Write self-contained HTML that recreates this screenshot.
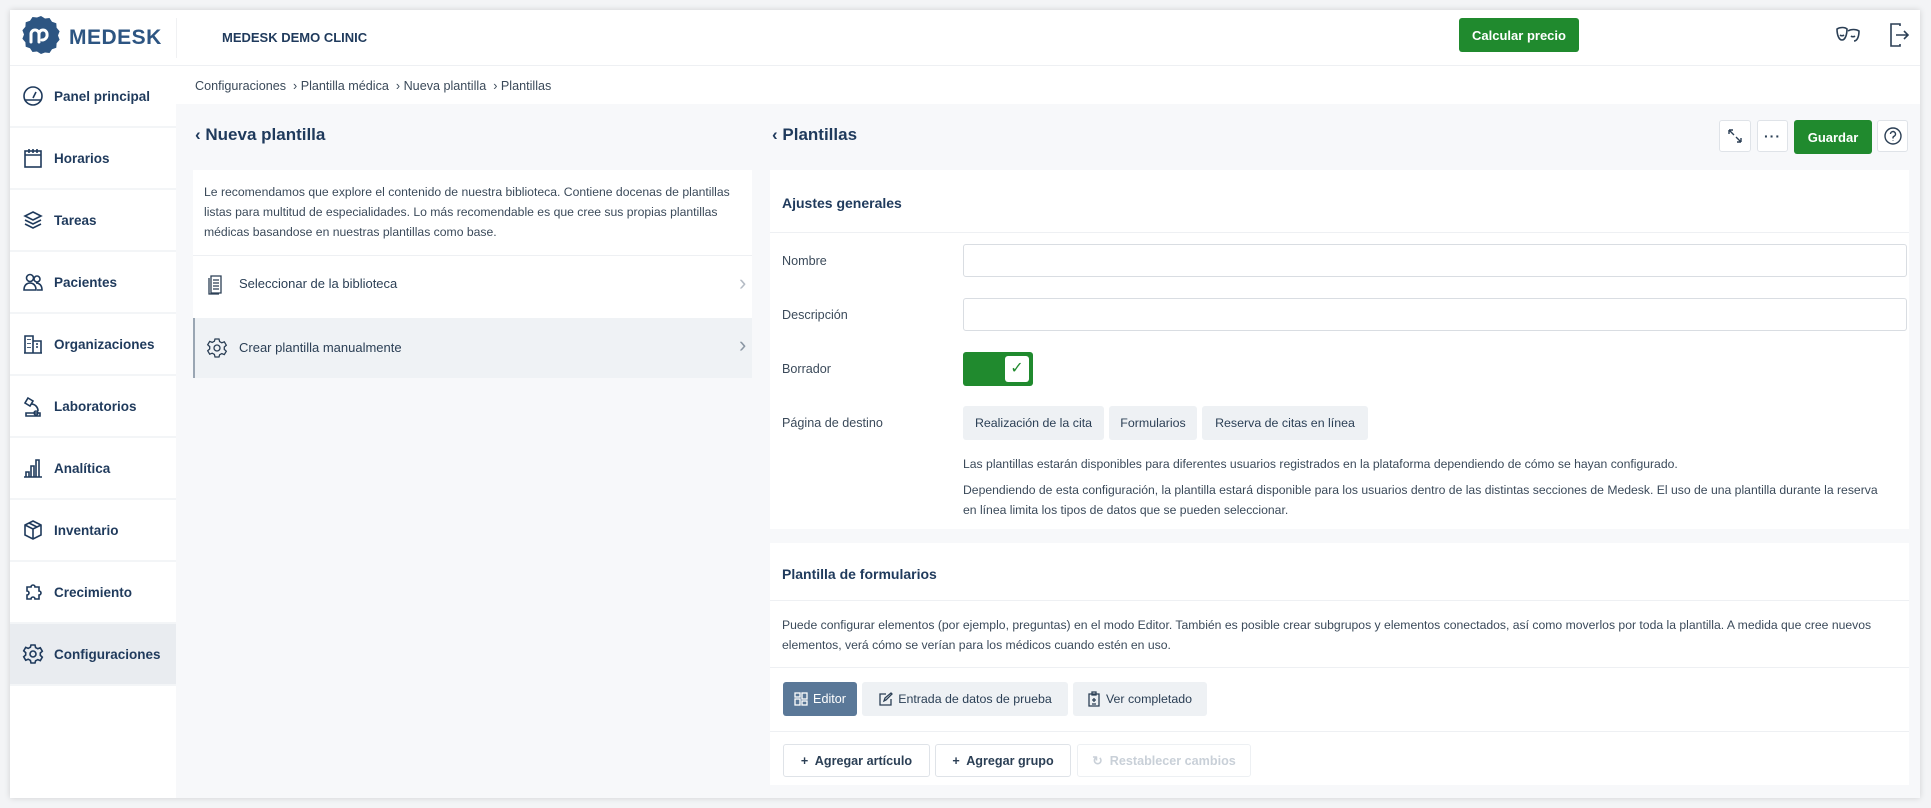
<!DOCTYPE html>
<html><head><meta charset="utf-8"><style>
*{box-sizing:border-box;margin:0;padding:0}
body{width:1931px;height:808px;background:#f3f4f6;font-family:"Liberation Sans",sans-serif;color:#2b3f55;position:relative;overflow:hidden}
.frame{position:absolute;left:10px;top:10px;width:1910px;height:788px;background:#fff;box-shadow:0 0 6px rgba(0,0,0,.15);overflow:hidden}
.abs{position:absolute}
.header{left:0;top:0;width:1910px;height:56px;background:#fff;border-bottom:1px solid #eef0f3}
.side{left:0;top:56px;width:166px;height:732px;background:#fff}
.si{position:absolute;left:0;width:166px;height:62px;border-bottom:2px solid #f3f5f7;display:flex;align-items:center;padding-left:12px;font-weight:bold;font-size:13.5px;color:#1f3a5c}
.si svg{width:22px;height:22px;margin-right:10px;flex:none}
.content{left:166px;top:94px;width:1744px;height:694px;background:#f7f8fa}
.card{position:absolute;background:#fff}
.txt{font-size:12.2px;color:#3b4a5a;line-height:20px}
.lbl{position:absolute;font-size:12.6px;color:#3b4a5a}
.inp{position:absolute;border:1px solid #d9dde2;border-radius:3px;background:#fff}
.chip{position:absolute;top:396px;height:34px;background:#eef1f4;border-radius:3px;font-size:12.4px;color:#2b3f55;display:flex;align-items:center;justify-content:center}
.btn{position:absolute;border:1px solid #dfe3e8;border-radius:3px;background:#fff;display:flex;align-items:center;justify-content:center;font-size:12.6px;font-weight:bold;color:#2b3f55}
.hl{position:absolute;height:1px;background:#eef0f3}
</style></head><body>
<div class="frame">
 <div class="abs header">
  <svg class="abs" style="left:11px;top:5px" width="40" height="40" viewBox="0 0 40 40"><path d="M20 1l4 2.5 4.5-.5 2.5 3.8 4.3 1.5.3 4.5 3 3.4-1.6 4.3 1.6 4.3-3 3.4-.3 4.5-4.3 1.5-2.5 3.8-4.5-.5L20 39l-4-2.5-4.5.5-2.5-3.8-4.3-1.5-.3-4.5-3-3.4L3 19.5 1.4 15.2l3-3.4.3-4.5L9 5.8 11.5 2l4.5.5z" fill="#2d5582"/><path d="M10 27v-8a4 4 0 0 1 8 0v8M18 19a4 4 0 0 1 8 0 5 5 0 0 1-5 6" stroke="#fff" stroke-width="3" fill="none" stroke-linecap="round"/></svg>
  <div class="abs" style="left:59px;top:16px;font-weight:bold;font-size:21px;color:#2d5582;letter-spacing:.5px">MEDESK</div>
  <div class="abs" style="left:166px;top:8px;width:1px;height:40px;background:#f0f1f3"></div>
  <div class="abs" style="left:212px;top:20px;font-weight:bold;font-size:13px;color:#1f3a5c">MEDESK DEMO CLINIC</div>
  <div class="abs" style="left:1449px;top:8px;width:120px;height:34px;background:#208a2e;border-radius:3px;color:#fff;font-weight:bold;font-size:13px;display:flex;align-items:center;justify-content:center">Calcular precio</div>
  <svg class="abs" style="left:1825px;top:14px" width="26" height="22" viewBox="0 0 26 22" fill="none" stroke="#2b3f55" stroke-width="1.6"><path d="M2 5c3-2 8-2 10 0 0 6-2 11-5 11S2 11 2 5z"/><path d="M13 7c3-2 8-2 11 0 0 6-2 10-5 10"/><path d="M5 11c1 1 3 1 4 0M16 12c1 1 3 1 4 0"/></svg>
  <svg class="abs" style="left:1878px;top:12px" width="22" height="26" viewBox="0 0 22 26" fill="none" stroke="#2b3f55" stroke-width="1.6"><path d="M12 4V2H3v22h9v-2"/><path d="M8 13h12M16 9l4 4-4 4"/></svg>
 </div>
 <div class="abs side">
  <div class="si" style="top:0"><svg viewBox="0 0 22 22" fill="none" stroke="#1f3a5c" stroke-width="1.6"><circle cx="11" cy="11" r="9"/><path d="M11 13l3-6M3 15h16"/></svg>Panel principal</div>
  <div class="si" style="top:62px"><svg viewBox="0 0 22 22" fill="none" stroke="#1f3a5c" stroke-width="1.6"><rect x="3" y="4" width="16" height="16"/><path d="M3 8h16M7 2v4M11 2v4M15 2v4"/></svg>Horarios</div>
  <div class="si" style="top:124px"><svg viewBox="0 0 22 22" fill="none" stroke="#1f3a5c" stroke-width="1.6"><path d="M11 3l8 4-8 4-8-4z M3 11l8 4 8-4M3 15l8 4 8-4"/></svg>Tareas</div>
  <div class="si" style="top:186px"><svg viewBox="0 0 22 22" fill="none" stroke="#1f3a5c" stroke-width="1.6"><circle cx="8" cy="7" r="3.5"/><circle cx="15" cy="8" r="3"/><path d="M2 19c0-5 3-7 6-7s6 2 6 7zM14 12c3 0 6 2 6 7h-5"/></svg>Pacientes</div>
  <div class="si" style="top:248px"><svg viewBox="0 0 22 22" fill="none" stroke="#1f3a5c" stroke-width="1.6"><path d="M3 20V3h8v17M11 8h8v12M2 20h18M6 6v1M8 6v1M6 10v1M8 10v1M6 14v1M8 14v1M14 11h2M14 14h2"/></svg>Organizaciones</div>
  <div class="si" style="top:310px"><svg viewBox="0 0 22 22" fill="none" stroke="#1f3a5c" stroke-width="1.6"><path d="M6 3l5 3-3 5-5-3zM9 9c4 0 7 3 7 7M4 18h14v3H4zM14 16a2 2 0 1 0 0.1 0"/></svg>Laboratorios</div>
  <div class="si" style="top:372px"><svg viewBox="0 0 22 22" fill="none" stroke="#1f3a5c" stroke-width="1.6"><path d="M2 20h18M4 20v-5h3v5M9 20V9h3v11M14 20V3h3v17"/></svg>Analítica</div>
  <div class="si" style="top:434px"><svg viewBox="0 0 22 22" fill="none" stroke="#1f3a5c" stroke-width="1.6"><path d="M11 2l8 4v10l-8 4-8-4V6zM3 6l8 4 8-4M11 10v10M7 4l8 4"/></svg>Inventario</div>
  <div class="si" style="top:496px"><svg viewBox="0 0 22 22" fill="none" stroke="#1f3a5c" stroke-width="1.6"><path d="M5 6h4a2 2 0 1 1 4 0h4v4a2 2 0 1 1 0 4v4h-4a2 2 0 1 0-4 0H5v-4a2 2 0 1 0 0-4z"/></svg>Crecimiento</div>
  <div class="si" style="top:558px;background:#e9ecf0"><svg viewBox="0 0 22 22" fill="none" stroke="#1f3a5c" stroke-width="1.6"><path d="M9 2h4l.6 2.6 2.2 1.2 2.5-1 2 3.4-2 1.8v2.4l2 1.8-2 3.4-2.5-1-2.2 1.2L13 20H9l-.6-2.6-2.2-1.2-2.5 1-2-3.4 2-1.8V9.6l-2-1.8 2-3.4 2.5 1 2.2-1.2z"/><circle cx="11" cy="11" r="3"/></svg>Configuraciones</div>
 </div>
 <div class="abs" style="left:166px;top:56px;width:1744px;height:38px;background:#fff"></div>
 <div class="abs" style="left:185px;top:69px;font-size:12.6px;color:#3b4a5a">Configuraciones &nbsp;› Plantilla médica &nbsp;› Nueva plantilla &nbsp;› Plantillas</div>
 <div class="abs content"></div>

 <!-- left -->
 <div class="abs" style="left:185px;top:115px;font-size:17px;font-weight:bold;color:#1f3a5c">‹ Nueva plantilla</div>
 <div class="card" style="left:183px;top:160px;width:559px;height:208px">
  <div class="txt" style="position:absolute;left:11px;top:12px;width:540px">Le recomendamos que explore el contenido de nuestra biblioteca. Contiene docenas de plantillas listas para multitud de especialidades. Lo más recomendable es que cree sus propias plantillas médicas basandose en nuestras plantillas como base.</div>
  <div class="hl" style="left:0;top:85px;width:559px"></div>
  <svg class="abs" style="left:14px;top:103px" width="18" height="22" viewBox="0 0 18 22" fill="none" stroke="#2b3f55" stroke-width="1.3"><path d="M4 3h10v17H4zM2 5v16h10"/><path d="M6 7h6M6 10h6M6 13h6M6 16h6"/></svg>
  <div class="abs" style="left:46px;top:106px;font-size:13px;color:#2b3f55">Seleccionar de la biblioteca</div>
  <div class="abs" style="left:546px;top:100px;font-size:22px;color:#b5bcc5">›</div>
  <div class="abs" style="left:0;top:148px;width:559px;height:60px;background:#eff2f5;border-left:2px solid #9aa6b3"></div>
  <svg class="abs" style="left:13px;top:167px" width="22" height="22" viewBox="0 0 22 22" fill="none" stroke="#2b3f55" stroke-width="1.3"><path d="M9 2h4l.6 2.6 2.2 1.2 2.5-1 2 3.4-2 1.8v2.4l2 1.8-2 3.4-2.5-1-2.2 1.2L13 20H9l-.6-2.6-2.2-1.2-2.5 1-2-3.4 2-1.8V9.6l-2-1.8 2-3.4 2.5 1 2.2-1.2z"/><circle cx="11" cy="11" r="3"/></svg>
  <div class="abs" style="left:46px;top:170px;font-size:13px;color:#2b3f55">Crear plantilla manualmente</div>
  <div class="abs" style="left:546px;top:162px;font-size:22px;color:#8a96a3">›</div>
 </div>

 <!-- right -->
 <div class="abs" style="left:762px;top:115px;font-size:17px;font-weight:bold;color:#1f3a5c">‹ Plantillas</div>
 <div class="btn" style="left:1709px;top:110px;width:32px;height:32px"><svg width="16" height="16" viewBox="0 0 16 16" fill="none" stroke="#2b3f55" stroke-width="1.4"><path d="M2 2l5 5M2 2h4M2 2v4M14 14l-5-5M14 14h-4M14 14v-4"/></svg></div>
 <div class="btn" style="left:1747px;top:110px;width:31px;height:32px;font-size:14px;letter-spacing:1px">···</div>
 <div class="abs" style="left:1784px;top:110px;width:78px;height:34px;background:#208a2e;border-radius:3px;color:#fff;font-weight:bold;font-size:13px;display:flex;align-items:center;justify-content:center">Guardar</div>
 <div class="btn" style="left:1867px;top:110px;width:31px;height:32px"><svg width="18" height="18" viewBox="0 0 18 18" fill="none" stroke="#2b3f55" stroke-width="1.4"><circle cx="9" cy="9" r="8"/><path d="M6.5 7a2.5 2.5 0 1 1 3.5 2.3c-.7.3-1 .8-1 1.5v.7M9 13.5v.5"/></svg></div>

 <div class="card" style="left:760px;top:160px;width:1139px;height:359px">
  <div class="abs" style="left:12px;top:25px;font-size:14px;font-weight:bold;color:#1f3a5c">Ajustes generales</div>
  <div class="hl" style="left:0;top:62px;width:1139px"></div>
  <div class="lbl" style="left:12px;top:84px">Nombre</div>
  <div class="inp" style="left:193px;top:74px;width:944px;height:33px"></div>
  <div class="lbl" style="left:12px;top:138px">Descripción</div>
  <div class="inp" style="left:193px;top:128px;width:944px;height:33px"></div>
  <div class="lbl" style="left:12px;top:192px">Borrador</div>
  <div class="abs" style="left:193px;top:182px;width:70px;height:34px;background:#208a2e;border-radius:3px"><div class="abs" style="left:42px;top:4px;width:24px;height:26px;background:#fff;border-radius:3px;text-align:center;line-height:26px;color:#208a2e;font-size:16px">✓</div></div>
  <div class="lbl" style="left:12px;top:246px">Página de destino</div>
  <div class="chip" style="left:193px;top:236px;width:141px">Realización de la cita</div>
  <div class="chip" style="left:339px;top:236px;width:88px">Formularios</div>
  <div class="chip" style="left:432px;top:236px;width:166px">Reserva de citas en línea</div>
  <div class="txt" style="position:absolute;left:193px;top:284px;width:930px">Las plantillas estarán disponibles para diferentes usuarios registrados en la plataforma dependiendo de cómo se hayan configurado.</div>
  <div class="txt" style="position:absolute;left:193px;top:310px;width:915px">Dependiendo de esta configuración, la plantilla estará disponible para los usuarios dentro de las distintas secciones de Medesk. El uso de una plantilla durante la reserva en línea limita los tipos de datos que se pueden seleccionar.</div>
 </div>

 <div class="card" style="left:760px;top:533px;width:1139px;height:242px">
  <div class="abs" style="left:12px;top:23px;font-size:14px;font-weight:bold;color:#1f3a5c">Plantilla de formularios</div>
  <div class="hl" style="left:0;top:57px;width:1139px"></div>
  <div class="txt" style="position:absolute;left:12px;top:72px;width:1100px">Puede configurar elementos (por ejemplo, preguntas) en el modo Editor. También es posible crear subgrupos y elementos conectados, así como moverlos por toda la plantilla. A medida que cree nuevos elementos, verá cómo se verían para los médicos cuando estén en uso.</div>
  <div class="hl" style="left:0;top:124px;width:1139px"></div>
  <div class="abs" style="left:13px;top:139px;width:74px;height:34px;background:#5a7898;border-radius:3px;color:#fff;font-size:12.6px;display:flex;align-items:center;justify-content:center"><svg width="14" height="14" viewBox="0 0 14 14" fill="none" stroke="#fff" stroke-width="1.3" style="margin-right:5px"><rect x="1" y="1" width="5" height="4"/><rect x="8" y="1" width="5" height="6"/><rect x="1" y="7" width="5" height="6"/><rect x="8" y="9" width="5" height="4"/></svg>Editor</div>
  <div class="chip" style="left:92px;top:139px;width:206px"><svg width="15" height="15" viewBox="0 0 15 15" fill="none" stroke="#2b3f55" stroke-width="1.3" style="margin-right:5px"><path d="M8 2H2v11h11V7M6 9l1-3 6-5 1 1-6 6z"/></svg>Entrada de datos de prueba</div>
  <div class="chip" style="left:303px;top:139px;width:134px"><svg width="12" height="16" viewBox="0 0 12 16" fill="none" stroke="#2b3f55" stroke-width="1.3" style="margin-right:6px"><path d="M1 3h10v12H1zM4 1h4v3H4zM6 7v4M4 9h4M4 13h4"/></svg>Ver completado</div>
  <div class="hl" style="left:0;top:188px;width:1139px"></div>
  <div class="btn" style="left:13px;top:201px;width:147px;height:33px">+&nbsp; Agregar artículo</div>
  <div class="btn" style="left:165px;top:201px;width:136px;height:33px">+&nbsp; Agregar grupo</div>
  <div class="btn" style="left:307px;top:201px;width:174px;height:33px;color:#c9d0d8;border-color:#edf0f3">↻&nbsp; Restablecer cambios</div>
 </div>
</div>
</body></html>
